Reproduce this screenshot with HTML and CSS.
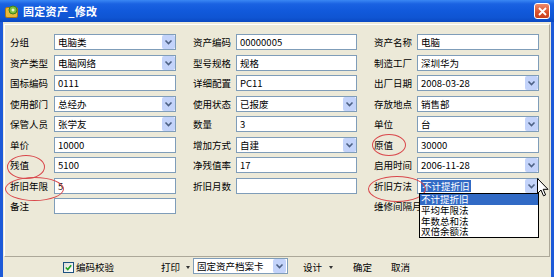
FILE: index.html
```html
<!DOCTYPE html>
<html>
    <head>
        <meta charset="utf-8">
        <title>固定资产_修改</title>
        <link rel="stylesheet" href="styles.css">
    </head>
    <body>
        <div class="window">
            <div class="titlebar">
                <svg class="app-icon" width="14" height="13" viewBox="0 0 14 13">
                    <rect x="0.5" y="2.5" width="12" height="10" rx="1.5" fill="#E9B93A" stroke="#A8771C"/>
                    <circle cx="8" cy="5" r="4" fill="#7DC13E" stroke="#3F7F1B"/>
                    <circle cx="8" cy="5" r="1.5" fill="#E8F7C8"/>
                </svg>
                <span class="title">固定资产_修改</span>
                <div class="close">
                    <svg width="9" height="9" viewBox="0 0 9 9"><path d="M1 1 L8 8 M8 1 L1 8" stroke="#fff" stroke-width="1.8"/></svg>
                </div>
            </div>
            <div class="frame">
                <div class="panel">
                    <div class="form">
                        <div class="field"><span class="label">分组</span><div class="box">电脑类<svg class="arrow" viewBox="0 0 13 14"><rect x="0" y="0" width="13" height="14" rx="2" fill="#C3D3FA"/><path d="M3.5 5.5 L6.5 8.5 L9.5 5.5" stroke="#4D6185" stroke-width="1.6" fill="none"/></svg></div></div>
                        <div class="field"><span class="label">资产编码</span><div class="box">00000005</div></div>
                        <div class="field"><span class="label">资产名称</span><div class="box">电脑</div></div>

                        <div class="field"><span class="label">资产类型</span><div class="box">电脑网络<svg class="arrow" viewBox="0 0 13 14"><rect x="0" y="0" width="13" height="14" rx="2" fill="#C3D3FA"/><path d="M3.5 5.5 L6.5 8.5 L9.5 5.5" stroke="#4D6185" stroke-width="1.6" fill="none"/></svg></div></div>
                        <div class="field"><span class="label">型号规格</span><div class="box">规格</div></div>
                        <div class="field"><span class="label">制造工厂</span><div class="box">深圳华为</div></div>

                        <div class="field"><span class="label">国标编码</span><div class="box">0111</div></div>
                        <div class="field"><span class="label">详细配置</span><div class="box">PC11</div></div>
                        <div class="field"><span class="label">出厂日期</span><div class="box">2008-03-28<svg class="arrow" viewBox="0 0 13 14"><rect x="0" y="0" width="13" height="14" rx="2" fill="#C3D3FA"/><path d="M3.5 5.5 L6.5 8.5 L9.5 5.5" stroke="#4D6185" stroke-width="1.6" fill="none"/></svg></div></div>

                        <div class="field"><span class="label">使用部门</span><div class="box">总经办<svg class="arrow" viewBox="0 0 13 14"><rect x="0" y="0" width="13" height="14" rx="2" fill="#C3D3FA"/><path d="M3.5 5.5 L6.5 8.5 L9.5 5.5" stroke="#4D6185" stroke-width="1.6" fill="none"/></svg></div></div>
                        <div class="field"><span class="label">使用状态</span><div class="box">已报废<svg class="arrow" viewBox="0 0 13 14"><rect x="0" y="0" width="13" height="14" rx="2" fill="#C3D3FA"/><path d="M3.5 5.5 L6.5 8.5 L9.5 5.5" stroke="#4D6185" stroke-width="1.6" fill="none"/></svg></div></div>
                        <div class="field"><span class="label">存放地点</span><div class="box">销售部</div></div>

                        <div class="field"><span class="label">保管人员</span><div class="box">张学友<svg class="arrow" viewBox="0 0 13 14"><rect x="0" y="0" width="13" height="14" rx="2" fill="#C3D3FA"/><path d="M3.5 5.5 L6.5 8.5 L9.5 5.5" stroke="#4D6185" stroke-width="1.6" fill="none"/></svg></div></div>
                        <div class="field"><span class="label">数量</span><div class="box">3</div></div>
                        <div class="field"><span class="label">单位</span><div class="box">台<svg class="arrow" viewBox="0 0 13 14"><rect x="0" y="0" width="13" height="14" rx="2" fill="#C3D3FA"/><path d="M3.5 5.5 L6.5 8.5 L9.5 5.5" stroke="#4D6185" stroke-width="1.6" fill="none"/></svg></div></div>

                        <div class="field"><span class="label">单价</span><div class="box">10000</div></div>
                        <div class="field"><span class="label">增加方式</span><div class="box">自建<svg class="arrow" viewBox="0 0 13 14"><rect x="0" y="0" width="13" height="14" rx="2" fill="#C3D3FA"/><path d="M3.5 5.5 L6.5 8.5 L9.5 5.5" stroke="#4D6185" stroke-width="1.6" fill="none"/></svg></div></div>
                        <div class="field"><span class="label">原值</span><div class="box">30000</div></div>

                        <div class="field"><span class="label">残值</span><div class="box">5100</div></div>
                        <div class="field"><span class="label">净残值率</span><div class="box">17</div></div>
                        <div class="field"><span class="label">启用时间</span><div class="box">2006-11-28<svg class="arrow" viewBox="0 0 13 14"><rect x="0" y="0" width="13" height="14" rx="2" fill="#C3D3FA"/><path d="M3.5 5.5 L6.5 8.5 L9.5 5.5" stroke="#4D6185" stroke-width="1.6" fill="none"/></svg></div></div>

                        <div class="field"><span class="label">折旧年限</span><div class="box">5</div></div>
                        <div class="field"><span class="label">折旧月数</span><div class="box"></div></div>
                        <div class="field"><span class="label">折旧方法</span><div class="box"><span class="picked">不计提折旧</span><svg class="arrow" viewBox="0 0 13 14"><rect x="0" y="0" width="13" height="14" rx="2" fill="#C3D3FA"/><path d="M3.5 5.5 L6.5 8.5 L9.5 5.5" stroke="#4D6185" stroke-width="1.6" fill="none"/></svg></div></div>

                        <div class="field"><span class="label">备注</span><div class="box"></div></div>
                        <div class="field"></div>
                        <div class="field"><span class="label">维修间隔月</span></div>
                    </div>
                </div>
                <div class="toolbar">
                    <span class="check">
                        <svg width="7" height="7" viewBox="0 0 7 7"><path d="M0.8 3.5 L2.8 5.5 L6.2 1.2" stroke="#21A121" stroke-width="1.6" fill="none"/></svg>
                    </span>
                    <span class="check-text">编码校验</span>
                    <span class="tool print">打印</span>
                    <span class="tri tri-print"></span>
                    <div class="box report">固定资产档案卡<svg class="arrow" viewBox="0 0 13 14"><rect x="0" y="0" width="13" height="14" rx="2" fill="#C3D3FA"/><path d="M3.5 5.5 L6.5 8.5 L9.5 5.5" stroke="#4D6185" stroke-width="1.6" fill="none"/></svg></div>
                    <span class="tool design">设计</span>
                    <span class="tri tri-design"></span>
                    <span class="tool ok">确定</span>
                    <span class="tool cancel">取消</span>
                </div>
            </div>

            <!-- red marks drawn over the screenshot -->
            <div class="mark mark-canzhi"></div>
            <div class="mark mark-nianxian"></div>
            <div class="mark mark-yuanzhi"></div>
            <div class="mark mark-fangfa"></div>

            <ul class="droplist">
                <li class="on">不计提折旧</li>
                <li>平均年限法</li>
                <li>年数总和法</li>
                <li>双倍余额法</li>
            </ul>

            <svg class="cursor" width="12" height="19" viewBox="0 0 12 19">
                <path d="M0.5 0.5 L0.5 15.5 L4 12 L6.5 17.8 L8.6 16.9 L6.2 11.3 L11 11.3 Z" fill="#fff" stroke="#000" stroke-width="1"/>
            </svg>
        </div>
    </body>
</html>
```

FILE: styles.css
```css
html, body {
    margin: 0;
    padding: 0;
    background: #ECE9D8;
}

body {
    font-family: "Noto Sans CJK SC", "DejaVu Sans", sans-serif;
    font-size: 9.5px;
    color: #000;
}

.window {
    position: relative;
    width: 554px;
    height: 277px;
    display: flex;
    flex-direction: column;
    overflow: hidden;
}

.titlebar {
    height: 22px;
    flex: none;
    display: flex;
    align-items: center;
    padding: 0 4px 0 5px;
    background: linear-gradient(#3A87F4 0%, #1A62E2 18%, #1159DB 50%, #0F55D3 80%, #0A48C2 100%);
}

.app-icon {
    flex: none;
}

.title {
    margin-left: 4px;
    color: #fff;
    font-size: 11px;
    font-weight: bold;
    letter-spacing: 0.3px;
    line-height: 22px;
}

.close {
    margin-left: auto;
    margin-right: 0;
    width: 14px;
    height: 14px;
    border: 1px solid #fff;
    border-radius: 3px;
    background: linear-gradient(#EE8A6B, #D9502A 60%, #C8401E);
    display: flex;
    align-items: center;
    justify-content: center;
}

.frame {
    flex: 1;
    display: flex;
    flex-direction: column;
    border-left: 3px solid #1D5AD8;
    border-right: 3px solid #1D5AD8;
    padding-top: 2px;
    background: #ECE9D8;
}

.panel {
    flex: 1;
    margin: 0 1px;
    border: 1px solid;
    border-color: #FFFFFF #ACA899 #ACA899 #FFFFFF;
    padding: 9px 0 0 4px;
}

.form {
    display: grid;
    grid-template-columns: 167px 165px 166px;
    column-gap: 16px;
    row-gap: 4.5px;
    grid-auto-rows: 16px;
}

.field {
    display: flex;
    align-items: center;
}

.label {
    width: 45px;
    flex: none;
    white-space: nowrap;
    padding-left: 1px;
    box-sizing: border-box;
}

.field:nth-child(3n+2) .label,
.field:nth-child(3n) .label {
    width: 44px;
}

.box {
    flex: 1;
    height: 16px;
    box-sizing: border-box;
    border: 1px solid #7F9DB9;
    background: #fff;
    display: flex;
    align-items: center;
    padding-left: 3px;
    white-space: nowrap;
}

.arrow {
    width: 13px;
    height: 14px;
    margin-left: auto;
    flex: none;
}

.picked {
    background: #316AC5;
    color: #fff;
    padding: 0 1px;
    line-height: 12px;
}

.toolbar {
    height: 20px;
    flex: none;
    display: flex;
    align-items: center;
    padding-left: 60px;
    white-space: nowrap;
}

.check {
    width: 9px;
    height: 9px;
    border: 1px solid #1C5180;
    background: linear-gradient(135deg, #DCDCD7, #fff);
    display: flex;
    align-items: center;
    justify-content: center;
}

.check-text {
    margin-left: 2px;
}

.print {
    margin-left: 47px;
}

.tri {
    width: 0;
    height: 0;
    border-left: 2.5px solid transparent;
    border-right: 2.5px solid transparent;
    border-top: 3px solid #333;
}

.tri-print {
    margin-left: 6px;
}

.report {
    flex: none;
    width: 95px;
    margin-left: 3px;
    margin-top: -2px;
}

.report .arrow {
    margin-right: 1px;
}

.design {
    margin-left: 15px;
}

.tri-design {
    margin-left: 7px;
}

.ok {
    margin-left: 20px;
}

.cancel {
    margin-left: 19px;
}

.mark {
    position: absolute;
    border: 1px solid #D9474B;
    border-radius: 50%;
}

.mark-canzhi {
    left: 7px;
    top: 155px;
    width: 36px;
    height: 22px;
}

.mark-nianxian {
    left: 5px;
    top: 177px;
    width: 57px;
    height: 22px;
}

.mark-yuanzhi {
    left: 372px;
    top: 134px;
    width: 32px;
    height: 20px;
}

.mark-fangfa {
    left: 368px;
    top: 176px;
    width: 56px;
    height: 24px;
}

.droplist {
    position: absolute;
    left: 419px;
    top: 193px;
    width: 118px;
    margin: 0;
    padding: 0;
    list-style: none;
    background: #fff;
    border: 1px solid #000;
}

.droplist li {
    height: 10.8px;
    line-height: 10.8px;
    padding-left: 1px;
    font-size: 9.5px;
}

.droplist li.on {
    background: #316AC5;
    color: #fff;
}

.cursor {
    position: absolute;
    left: 537px;
    top: 178px;
}
```
